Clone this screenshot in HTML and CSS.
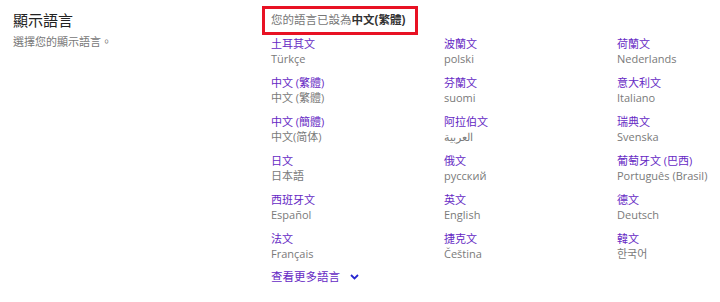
FILE: index.html
```html
<!DOCTYPE html>
<html lang="zh-Hant">
<head>
    <meta charset="UTF-8">
    <title>顯示語言</title>
    <link rel="stylesheet" href="styles.css">
</head>
<body>
    <div class="page">
        <div class="intro">
            <h2>顯示語言</h2>
            <p>選擇您的顯示語言。</p>
        </div>
        <div class="languages">
            <div class="current">您的語言已設為<strong>中文(繁體)</strong></div>
            <div class="lang-grid">
                <div class="lang"><a href="#">土耳其文</a><span>Türkçe</span></div>
                <div class="lang"><a href="#">波蘭文</a><span>polski</span></div>
                <div class="lang"><a href="#">荷蘭文</a><span>Nederlands</span></div>

                <div class="lang"><a href="#">中文 (繁體)</a><span>中文 (繁體)</span></div>
                <div class="lang"><a href="#">芬蘭文</a><span>suomi</span></div>
                <div class="lang"><a href="#">意大利文</a><span>Italiano</span></div>

                <div class="lang"><a href="#">中文 (簡體)</a><span>中文(简体)</span></div>
                <div class="lang"><a href="#">阿拉伯文</a><span>العربية</span></div>
                <div class="lang"><a href="#">瑞典文</a><span>Svenska</span></div>

                <div class="lang"><a href="#">日文</a><span>日本語</span></div>
                <div class="lang"><a href="#">俄文</a><span>русский</span></div>
                <div class="lang"><a href="#">葡萄牙文 (巴西)</a><span>Português (Brasil)</span></div>

                <div class="lang"><a href="#">西班牙文</a><span>Español</span></div>
                <div class="lang"><a href="#">英文</a><span>English</span></div>
                <div class="lang"><a href="#">德文</a><span>Deutsch</span></div>

                <div class="lang"><a href="#">法文</a><span>Français</span></div>
                <div class="lang"><a href="#">捷克文</a><span>Čeština</span></div>
                <div class="lang"><a href="#">韓文</a><span>한국어</span></div>
            </div>
            <a class="more" href="#">查看更多語言
                <svg width="9" height="6" viewBox="0 0 9 6"><path d="M1 1l3.5 3.5L8 1" fill="none" stroke="#2626d0" stroke-width="1.8"/></svg>
            </a>
        </div>
    </div>
</body>
</html>
```

FILE: styles.css
```css
body {
    margin: 0;
    background: #fff;
    font-family: "Open Sans", "Noto Sans CJK TC", sans-serif;
    color: #333;
}

.page {
    display: flex;
    padding: 6px 0 0 13px;
}

.intro {
    flex: none;
    width: 249px;
}

.intro h2 {
    margin: 4px 0 0;
    font-size: 15px;
    font-weight: normal;
    line-height: 20px;
    color: #222;
}

.intro p {
    margin: 4px 0 0;
    font-size: 11px;
    line-height: 16px;
    color: #777;
}

.languages {
    flex: 1;
    min-width: 0;
}

.current {
    display: inline-block;
    border: 3px solid #e81123;
    padding: 2px 10px 3px 6px;
    font-size: 11.5px;
    line-height: 18px;
    color: #777;
}

.current strong {
    color: #333;
}

.lang-grid {
    display: grid;
    grid-template-columns: 173px 173px auto;
    row-gap: 9px;
    padding: 1px 0 0 9px;
}

.lang {
    display: flex;
    flex-direction: column;
    font-size: 11px;
    line-height: 15px;
}

.lang a,
.more {
    color: #6629c4;
    text-decoration: none;
}

.lang span {
    color: #7a7a7a;
}

.more {
    display: inline-flex;
    align-items: center;
    gap: 10px;
    margin: 8px 0 0 9px;
    font-size: 11.5px;
    line-height: 16px;
}
```
